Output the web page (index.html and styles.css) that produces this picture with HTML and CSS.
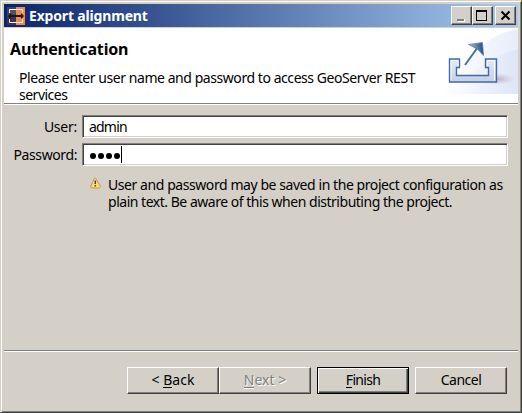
FILE: index.html
```html
<!DOCTYPE html>
<html lang="en">
<head>
<meta charset="utf-8">
<title>Export alignment</title>
<link rel="stylesheet" href="styles.css">
</head>
<body>
<main class="window">
  <header class="titlebar">
    <svg class="app-icon" width="18" height="18" viewBox="0 0 18 18">
      <path fill="#34446f" d="M0 0h9v9H0z"/><path fill="#57544b" d="M2 2h7v5H2z"/><path fill="#403052" d="M0 9h9v9H0z"/><path fill="#fa8549" d="M9 0h9v18H9z"/>
      <path fill="none" stroke="#fff" d="M2.500 6V2.500h13V6M2.500 12v3.500h13V12"/>
      <path fill="#17191b" d="M1 9l3-3v2h10V6l3 3-3 3v-2H4v2z"/>
    </svg>
    <h1 class="caption"><span class="t-caption">Export alignment</span></h1>
    <div class="controls">
      <span class="control"><svg width="17" height="15"><path fill="#808080" d="M4 11h7v2H4z"/><path fill="#fff" d="M5 13h7v1H5zM11 11h1v2h-1z"/></svg></span>
      <span class="control"><svg width="17" height="15"><path fill="#000" fill-rule="evenodd" d="M2 2h11v11H2zM3 4v8h9V4z"/></svg></span>
      <span class="control close"><svg width="17" height="15"><path fill="none" stroke="#000" stroke-width="2" d="M4.500 3.500l8 8M12.500 3.500l-8 8"/></svg></span>
    </div>
  </header>
  <section class="banner">
    <div class="banner-text">
      <h2 class="heading"><span class="t-heading">Authentication</span></h2>
      <p class="message"><span class="t-message">Please enter user name and password to access GeoServer REST</span><br><span class="t-services">services</span></p>
    </div>
    <svg class="export-icon" width="75" height="66" viewBox="0 0 75 66">
      <defs>
        <linearGradient id="wash" x1="0" x2="1"><stop offset="0" stop-color="#fff"/><stop offset="1" stop-color="#dde5f7"/></linearGradient>
        <linearGradient id="sweep" x1="0" x2="1"><stop offset="0" stop-color="#fff"/><stop offset="1" stop-color="#e8edfa"/></linearGradient>
        <linearGradient id="tray" y1="0" y2="1" x2="0"><stop offset="0" stop-color="#e4ebf5"/><stop offset="1" stop-color="#c3d0e6"/></linearGradient>
        <linearGradient id="head" x1="0" x2="1"><stop offset="0" stop-color="#a9c2d9"/><stop offset="1" stop-color="#244e86"/></linearGradient>
        <radialGradient id="shade"><stop offset="0" stop-color="#a18d9e" stop-opacity=".6"/><stop offset="1" stop-color="#b9a8b8" stop-opacity="0"/></radialGradient>
      </defs>
      <path fill="url(#sweep)" d="M75 1Q43 7 28 32L0 66h75z"/>
      <path fill="url(#wash)" d="M75 21Q45 29 24 49L0 66h75z"/>
      <ellipse cx="54" cy="51" rx="18" ry="6" fill="url(#shade)"/>
      <path fill="url(#tray)" stroke="#426aa5" stroke-width="1.400" d="M6.500 31h10v8.500h-3v8h32v-8h-3V31h11v23h-47z"/>
      <path fill="none" stroke="#fff" stroke-opacity=".8" d="M8 52.500V32.500h7V38M44.500 38v-5.500h7v20"/>
      <path fill="none" stroke="#45709d" stroke-width="2" d="M22 37L35 19"/>
      <path fill="url(#head)" stroke="#5680ab" stroke-width=".7" d="M25.500 16.500L39.500 14.500l1 13-5.500-6z"/>
    </svg>
  </section>
  <section class="form">
    <label class="row"><span class="label"><span class="t-user">User:</span></span><span class="field"><span class="t-admin">admin</span></span></label>
    <label class="row"><span class="label"><span class="t-password">Password:</span></span><span class="field"><span class="dots"><i></i><i></i><i></i><i></i></span><span class="caret"></span></span></label>
    <div class="note">
      <svg width="12" height="12" viewBox="0 0 12 12"><path fill="#f9d887" stroke="#cf963e" stroke-linejoin="round" d="M5.500 1L10.500 9.500Q10 11 9 11H2Q.5 11 .6 9.500L4.500 1z"/><path stroke="#584329" stroke-width="1.500" d="M5.300 3.500v3.500M5.300 8v1.500"/></svg>
      <p><span class="t-note1">User and password may be saved in the project configuration as</span><br><span class="t-note2">plain text. Be aware of this when distributing the project.</span></p>
    </div>
  </section>
  <footer class="buttons">
    <span class="button"><span class="t-back">&lt; <u>B</u>ack</span></span>
    <span class="button disabled"><span class="t-next"><u>N</u>ext &gt;</span></span>
    <span class="button default"><span class="t-finish"><u>F</u>inish</span></span>
    <span class="button cancel"><span class="t-cancel">Cancel</span></span>
  </footer>
</main>
</body>
</html>
```
FILE: styles.css
```css
* { box-sizing: border-box; }
body { margin: 0; font: 14px/17px "Noto Sans", sans-serif; color: #000; }
h1, h2, p { margin: 0; white-space: nowrap; }
svg { display: block; flex: none; }
.window {
  width: 522px; height: 413px; padding: 3px 3px 2px; background: #d4d0c8;
  border: 1px solid; border-color: #d4d0c8 #404040 #404040 #d4d0c8;
  box-shadow: inset 1px 1px #fff, inset -1px -1px #808080;
  display: flex; flex-direction: column;
}
.titlebar {
  height: 23px; flex: none; display: flex; align-items: center; padding: 0 2px 0 3px;
  background: linear-gradient(90deg, #0a246a, #a6caf0);
}
.caption { margin-left: 4px; font: bold 14px/21px "Noto Sans", sans-serif; color: #fff; }
.controls { margin-left: auto; display: flex; }
.control {
  width: 21px; height: 19px; padding: 1px; background: #d4d0c8;
  border: 1px solid; border-color: #fff #404040 #404040 #fff;
  box-shadow: inset -1px -1px #808080;
}
.close { margin-left: 2px; }
.banner {
  height: 77px; flex: none; margin-top: 1px; background: #fff; display: flex; justify-content: space-between;
  border-bottom: 1px solid #fff; box-shadow: inset 0 -1px #808080;
}
.banner-text { padding: 11px 0 0 6px; }
.heading { font: bold 16px/20px "Noto Sans", sans-serif; }
.message { margin: 10px 0 0 9px; }
.form { padding: 10px 10px 0 8px; }
.row { display: flex; height: 23px; margin-bottom: 5px; }
.label { width: 65px; padding-top: 3px; display: flex; justify-content: flex-end; white-space: nowrap; }
.field {
  flex: 1; margin-left: 5px; display: flex; padding: 2px 0 0 6px; background: #fff;
  border: 1px solid; border-color: #808080 #fff #fff #808080;
  box-shadow: inset 1px 1px #404040, inset -1px -1px #d4d0c8;
}
.dots { display: flex; gap: 2px; padding: 7px 0 0 1px; }
.dots i { width: 6px; height: 6px; border-radius: 3px; background: #000; }
.caret { width: 1px; height: 17px; background: #000; margin-left: 1px; }
.note { display: flex; padding: 5px 0 0 78px; }
.note svg { margin-top: 1px; }
.note p { margin-left: 6px; }
.buttons {
  margin-top: auto; height: 60px; display: flex; justify-content: flex-end; padding: 16px 11px 0 0;
  border-top: 1px solid #808080; box-shadow: inset 0 1px #fff;
}
.button {
  width: 92px; height: 27px; display: flex; justify-content: center; padding-top: 3px;
  border: 1px solid; border-color: #fff #404040 #404040 #fff;
  box-shadow: inset -1px -1px #808080; white-space: nowrap;
}
.button u { text-decoration: none; box-shadow: 0 -1px #000 inset; display: inline-block; height: 17px; }
.disabled { color: #808080; text-shadow: 1px 1px #fff; }
.disabled u { box-shadow: 0 -1px #808080 inset, 0 1px #fff; }
.default {
  margin-left: 6px; border-color: #000;
  box-shadow: inset 1px 1px #fff, inset -1px -1px #404040, inset -2px -2px #808080;
}
.cancel { margin-left: 6px; }
.t-caption { letter-spacing: -0.17px; }
.t-heading { letter-spacing: -0.15px; }
.t-message { letter-spacing: -0.44px; }
.t-services { letter-spacing: -0.5px; }
.t-user { letter-spacing: -0.25px; }
.t-password { letter-spacing: -0.4px; }
.t-admin { letter-spacing: -0.8px; }
.t-note1 { letter-spacing: -0.43px; }
.t-note2 { letter-spacing: -0.48px; }
.t-finish { letter-spacing: -0.7px; }
.t-cancel { letter-spacing: -0.5px; }
```
